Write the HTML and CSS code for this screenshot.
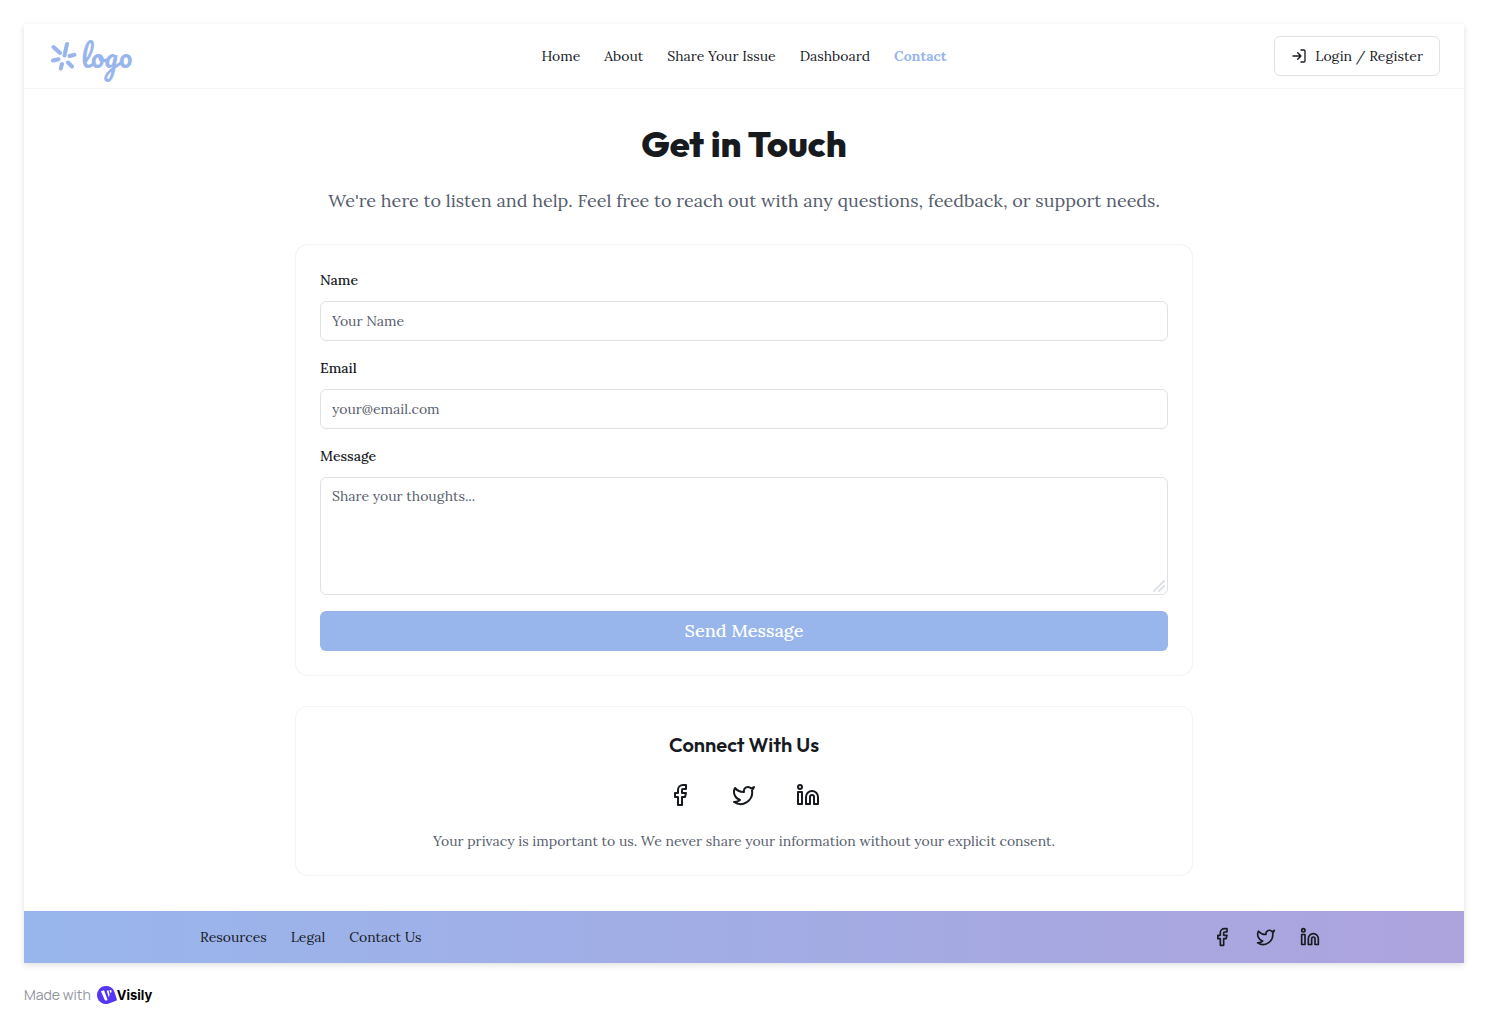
FILE: index.html
```html
<!DOCTYPE html>
<html lang="en">
<head>
  <meta charset="utf-8">
  <meta name="viewport" content="width=device-width, initial-scale=1">
  <title>Get in Touch</title>
  <link rel="stylesheet" href="styles.css">
</head>
<body>
  <svg class="sprite" aria-hidden="true">
    <symbol id="facebook" viewBox="0 0 24 24"><path d="M18 2h-3a5 5 0 0 0-5 5v3H7v4h3v8h4v-8h3l1-4h-4V7a1 1 0 0 1 1-1h3z"/></symbol>
    <symbol id="twitter" viewBox="0 0 24 24"><path d="M22 4s-.7 2.1-2 3.4c1.6 10-9.4 17.3-18 11.6 2.2.1 4.4-.6 6-2C3 15.500.5 9.600 3 5c2.200 2.600 5.600 4.100 9 4-.9-4.200 4-6.600 7-3.800 1.100 0 3-1.200 3-1.200z"/></symbol>
    <symbol id="linkedin" viewBox="0 0 24 24"><path d="M16 8a6 6 0 0 1 6 6v7h-4v-7a2 2 0 0 0-4 0v7h-4v-7a6 6 0 0 1 6-6z"/><rect x="2" y="9" width="4" height="12"/><circle cx="4" cy="4" r="2"/></symbol>
  </svg>

  <div class="page">
    <header class="header">
      <a class="logo" href="#">
        <svg class="logo-mark" viewBox="0 0 26 30" aria-hidden="true"><path d="M16 3L13.500 14.500M2.500 6l6.500 6M2 19.500l5.500-1.300M11 23l-1.200 4.500M17 21.500l4 4M18.500 15l5-1.200"/></svg>
        <span>logo</span>
      </a>
      <nav class="nav" aria-label="Main">
        <a href="#">Home</a>
        <a href="#">About</a>
        <a href="#">Share Your Issue</a>
        <a href="#">Dashboard</a>
        <a class="current" href="#" aria-current="page">Contact</a>
      </nav>
      <button class="login" type="button">
        <svg class="icon icon-small" viewBox="0 0 24 24" aria-hidden="true"><path d="M15 3h4a2 2 0 0 1 2 2v14a2 2 0 0 1-2 2h-4M10 17l5-5-5-5M15 12H3"/></svg>
        Login / Register
      </button>
    </header>

    <main class="main">
      <h1>Get in Touch</h1>
      <p class="lead">We're here to listen and help. Feel free to reach out with any questions, feedback, or support needs.</p>

      <form class="card form">
        <div class="field">
          <label for="name">Name</label>
          <input id="name" type="text" placeholder="Your Name">
        </div>
        <div class="field">
          <label for="email">Email</label>
          <input id="email" type="email" placeholder="your@email.com">
        </div>
        <div class="field">
          <label for="message">Message</label>
          <div class="area">
            <textarea id="message" placeholder="Share your thoughts..."></textarea>
            <svg class="grip" viewBox="0 0 12 12" aria-hidden="true"><path d="M1 11L11 1M6 11l5-5"/></svg>
          </div>
        </div>
        <button class="send" type="submit">Send Message</button>
      </form>

      <section class="card connect">
        <h2>Connect With Us</h2>
        <div class="social">
          <a href="#" aria-label="Facebook"><svg class="icon"><use href="#facebook"/></svg></a>
          <a href="#" aria-label="Twitter"><svg class="icon"><use href="#twitter"/></svg></a>
          <a href="#" aria-label="LinkedIn"><svg class="icon"><use href="#linkedin"/></svg></a>
        </div>
        <p>Your privacy is important to us. We never share your information without your explicit consent.</p>
      </section>
    </main>

    <footer class="footer">
      <div class="footer-inner">
        <nav class="nav" aria-label="Footer">
          <a href="#">Resources</a>
          <a href="#">Legal</a>
          <a href="#">Contact Us</a>
        </nav>
        <div class="footer-social">
          <a href="#" aria-label="Facebook"><svg class="icon icon-medium"><use href="#facebook"/></svg></a>
          <a href="#" aria-label="Twitter"><svg class="icon icon-medium"><use href="#twitter"/></svg></a>
          <a href="#" aria-label="LinkedIn"><svg class="icon icon-medium"><use href="#linkedin"/></svg></a>
        </div>
      </div>
    </footer>
  </div>

  <div class="credit">
    <span>Made with</span>
    <a href="#">
      <svg viewBox="0 0 20 18" aria-hidden="true"><path fill="#5636f5" d="M9 0c4.500 0 7.300 2.500 8.500 6l2.300 7.300c.2.700-.1 1.200-.8 1.500l-6.500 2.500A9 9 0 1 1 9 0z"/><path fill="#fff" d="M4 5.200l3-1 3.300 8.700c.4 1-.2 1.700-1.200 1.700-.8 0-1.300-.5-1.600-1.200zM9.700 4.700l1.800-.5 1.100 4.500-.8 2.500zM12.500 4.300l1.700-.3.500 2.300-1.600.4z"/></svg>
      <span>Visily</span>
    </a>
  </div>
</body>
</html>
```
FILE: styles.css
```css
:root {
  --serif: "Lora", "Liberation Serif", serif;
  --display: "Outfit", "Lato", sans-serif;
  --ink: #171a1f;
  --muted: #565d6d;
  --blue: #98b6ec;
  --line: #dee1e6;
  --faint: #f3f4f6;
}

* {
  box-sizing: border-box;
}

body {
  margin: 0;
  padding: 24px;
  background: #fff;
  color: var(--ink);
  font: 14px/22px var(--serif);
}

h1,
h2,
p {
  margin: 0;
}

a {
  color: inherit;
  text-decoration: none;
}

button,
input,
textarea {
  font: inherit;
  color: inherit;
}

button {
  cursor: pointer;
}

.sprite {
  position: absolute;
  width: 0;
  height: 0;
}

.icon {
  display: block;
  width: 24px;
  height: 24px;
  fill: none;
  stroke: currentColor;
  stroke-width: 2;
  stroke-linecap: round;
  stroke-linejoin: round;
}

.icon-medium {
  width: 20px;
  height: 20px;
}

.icon-small {
  width: 16px;
  height: 16px;
}

.page {
  background: #fff;
  box-shadow: 0 2px 6px rgba(23, 26, 31, 0.14);
}

.header {
  display: grid;
  grid-template-columns: 1fr auto 1fr;
  align-items: center;
  min-height: 65px;
  padding: 0 24px;
  border-bottom: 1px solid var(--faint);
}

.logo {
  display: flex;
  align-items: center;
  justify-self: start;
  gap: 4px;
  padding-left: 3px;
  color: var(--blue);
  font: 400 30px/30px "Pacifico", "Dancing Script", "Caveat", "Lato", cursive;
}

.logo-mark {
  width: 26px;
  height: 30px;
  fill: none;
  stroke: currentColor;
  stroke-width: 4;
  stroke-linecap: round;
}

.nav {
  display: flex;
  gap: 24px;
}

.current {
  color: var(--blue);
  font-weight: 700;
}

.login {
  display: flex;
  align-items: center;
  justify-self: end;
  gap: 8px;
  height: 40px;
  padding: 0 16px;
  border: 1px solid var(--line);
  border-radius: 6px;
  background: #fff;
}

.main {
  max-width: 928px;
  margin: 0 auto;
  padding: 32px 16px 36px;
}

h1 {
  font: 800 36px/46px var(--display);
  text-align: center;
}

.lead {
  margin: 18px 0 28px;
  color: var(--muted);
  font-size: 18px;
  line-height: 32px;
  text-align: center;
}

.card {
  padding: 24px;
  border-radius: 12px;
  box-shadow: 0 0 0 1px var(--faint);
}

.form {
  display: grid;
  gap: 16px;
}

.field {
  display: grid;
  gap: 10px;
}

.field label {
  font-weight: 500;
}

.field input,
.field textarea {
  display: block;
  width: 100%;
  border: 1px solid var(--line);
  border-radius: 6px;
  background: #fff;
}

.field input {
  height: 40px;
  padding: 0 11px;
}

.area {
  position: relative;
}

.field textarea {
  height: 118px;
  padding: 7px 11px;
  resize: none;
}

::placeholder {
  color: var(--muted);
  opacity: 1;
}

.grip {
  position: absolute;
  right: 3px;
  bottom: 3px;
  width: 12px;
  height: 12px;
  fill: none;
  stroke: #dee1e6;
  stroke-width: 2;
  stroke-linecap: round;
}

.send {
  height: 40px;
  border: 0;
  border-radius: 6px;
  background: var(--blue);
  color: #fff;
  font-size: 18px;
  font-weight: 500;
}

.connect {
  display: grid;
  justify-items: center;
  gap: 24px;
  margin-top: 32px;
  text-align: center;
}

h2 {
  font: 600 20px/28px var(--display);
}

.social {
  display: flex;
  gap: 40px;
}

.connect p {
  color: var(--muted);
  line-height: 20px;
}

.footer {
  padding: 15px 16px;
  background: linear-gradient(90deg, #98b6ec, #ada3dd);
}

.footer-inner {
  display: flex;
  align-items: center;
  justify-content: space-between;
  max-width: 1152px;
  margin: 0 auto;
  padding-left: 32px;
}

.footer-social {
  display: flex;
  gap: 24px;
}

.credit {
  display: flex;
  align-items: center;
  gap: 6px;
  padding-top: 21px;
  color: #9095a1;
  font: 14px/22px "Manrope", "Inter", sans-serif;
}

.credit a {
  display: flex;
  align-items: center;
  color: #000;
  font: 700 13px/22px "Inter", sans-serif;
}

.credit svg {
  width: 20px;
  height: 18px;
}
```
